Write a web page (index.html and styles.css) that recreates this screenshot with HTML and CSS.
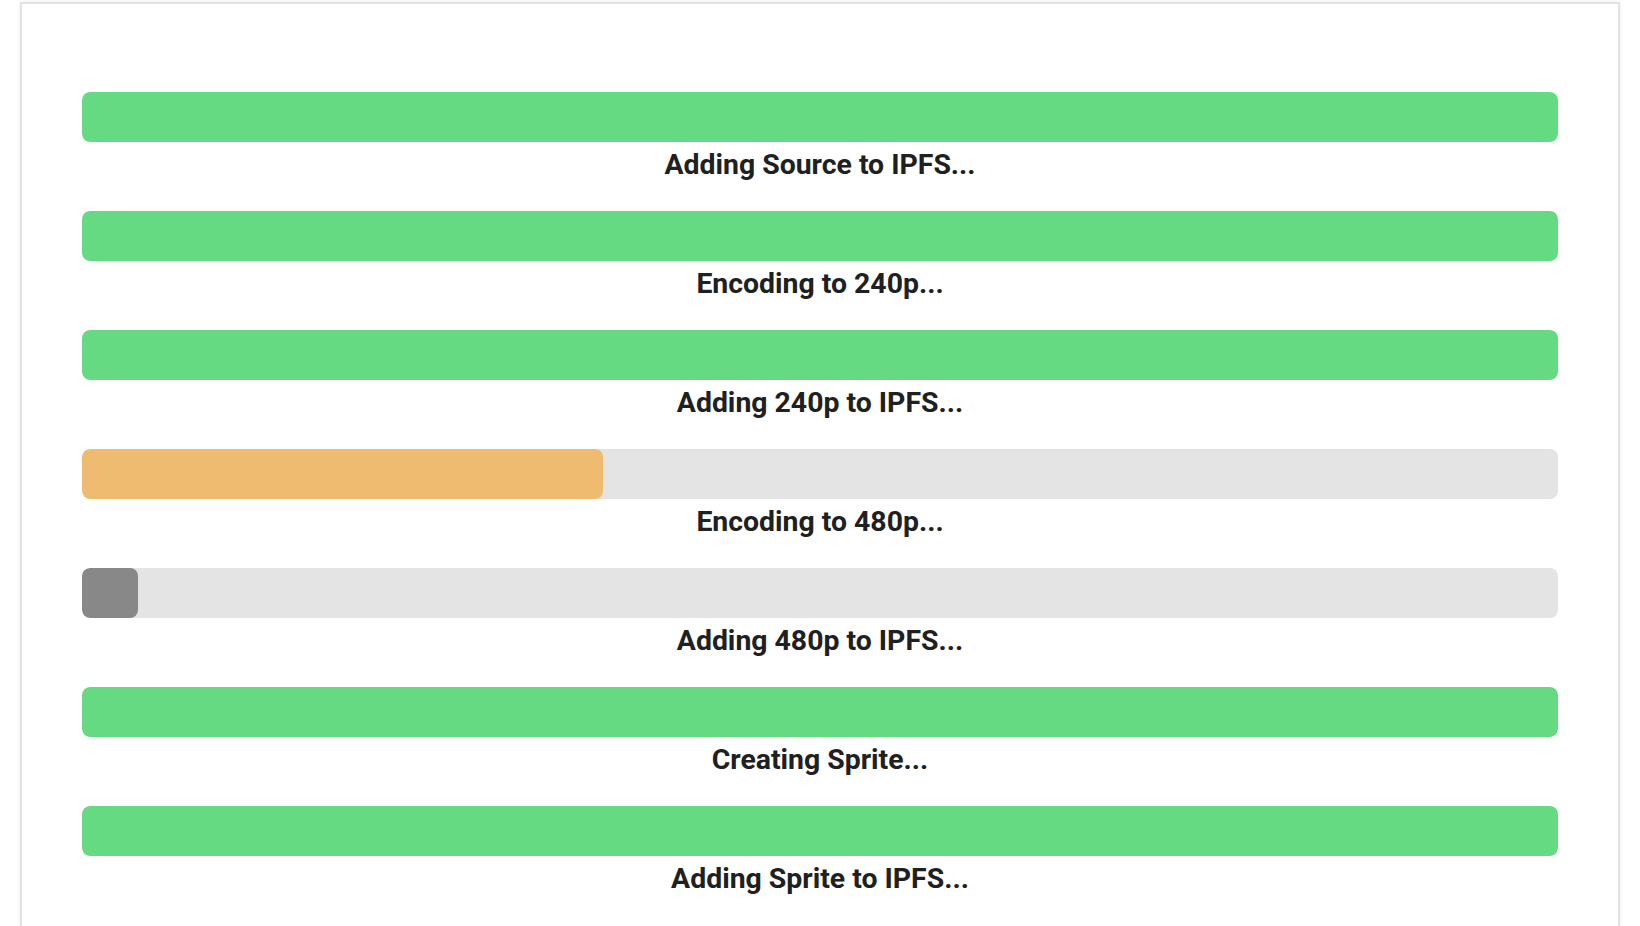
FILE: index.html
```html
<!DOCTYPE html>
<html>
<head>
<meta charset="utf-8">
<link rel="stylesheet" href="styles.css">
</head>
<body>
<div class="card">
  <div class="step">
    <div class="track"><div class="fill done" style="width:100%"></div></div>
    <div class="label">Adding Source to IPFS...</div>
  </div>
  <div class="step">
    <div class="track"><div class="fill done" style="width:100%"></div></div>
    <div class="label">Encoding to 240p...</div>
  </div>
  <div class="step">
    <div class="track"><div class="fill done" style="width:100%"></div></div>
    <div class="label">Adding 240p to IPFS...</div>
  </div>
  <div class="step">
    <div class="track"><div class="fill active" style="width:35.3%"></div></div>
    <div class="label">Encoding to 480p...</div>
  </div>
  <div class="step">
    <div class="track"><div class="fill pending" style="width:3.8%"></div></div>
    <div class="label">Adding 480p to IPFS...</div>
  </div>
  <div class="step">
    <div class="track"><div class="fill done" style="width:100%"></div></div>
    <div class="label">Creating Sprite...</div>
  </div>
  <div class="step">
    <div class="track"><div class="fill done" style="width:100%"></div></div>
    <div class="label">Adding Sprite to IPFS...</div>
  </div>
</div>
</body>
</html>
```

FILE: styles.css
```css
html, body {
  margin: 0;
  padding: 0;
  background: #ffffff;
}
body {
  padding: 2px 20px 0 20px;
  font-family: Roboto, "Liberation Sans", sans-serif;
  overflow: hidden;
}
.card {
  border: 2px solid #e2e2e2;
  box-shadow: 0 0 4px rgba(0,0,0,0.08);
  background: #fff;
  padding: 88px 60px 60px 60px;
  display: flex;
  flex-direction: column;
  gap: 30px;
}
.step {
  display: flex;
  flex-direction: column;
}
.track {
  height: 50px;
  background: #e4e4e4;
  border-radius: 8px;
  overflow: hidden;
  display: flex;
}
.fill {
  height: 100%;
  border-radius: 8px;
}
.fill.done { background: #66da82; }
.fill.active { background: #efbb70; }
.fill.pending { background: #888888; }
.label {
  margin-top: 6px;
  font-size: 28.4px;
  line-height: 33px;
  font-weight: 700;
  color: #202020;
  text-align: center;
}
```
